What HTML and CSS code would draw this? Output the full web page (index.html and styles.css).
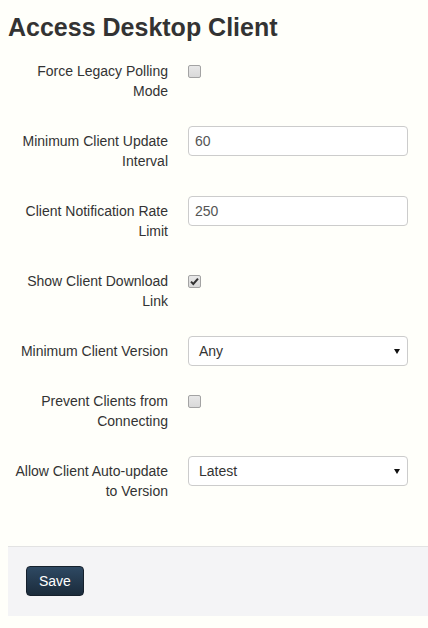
FILE: index.html
```html
<!DOCTYPE html>
<html>
<head>
<meta charset="utf-8">
<link rel="stylesheet" href="styles.css">
</head>
<body>
<div class="page">
  <h1 class="title">Access Desktop Client</h1>
  <form class="form">
    <div class="row">
      <label class="label">Force Legacy Polling Mode</label>
      <div class="control"><span class="check"></span></div>
    </div>
    <div class="row">
      <label class="label">Minimum Client Update Interval</label>
      <div class="control"><input class="input" type="text" value="60"></div>
    </div>
    <div class="row">
      <label class="label">Client Notification Rate Limit</label>
      <div class="control"><input class="input" type="text" value="250"></div>
    </div>
    <div class="row">
      <label class="label">Show Client Download Link</label>
      <div class="control"><span class="check checked"><svg viewBox="0 0 13 13" width="13" height="13"><path d="M3 6.6 L5.3 9 L10 3.6" fill="none" stroke="#333" stroke-width="2"/></svg></span></div>
    </div>
    <div class="row">
      <label class="label">Minimum Client Version</label>
      <div class="control"><div class="select"><span>Any</span><svg class="arrow" viewBox="0 0 6 5" width="6" height="5"><path d="M0 0 H6 L3 5 Z" fill="#111"/></svg></div></div>
    </div>
    <div class="row">
      <label class="label">Prevent Clients from Connecting</label>
      <div class="control"><span class="check"></span></div>
    </div>
    <div class="row">
      <label class="label">Allow Client Auto-update to Version</label>
      <div class="control"><div class="select"><span>Latest</span><svg class="arrow" viewBox="0 0 6 5" width="6" height="5"><path d="M0 0 H6 L3 5 Z" fill="#111"/></svg></div></div>
    </div>
  </form>
  <div class="footer">
    <button class="btn" type="button">Save</button>
  </div>
</div>
</body>
</html>
```

FILE: styles.css
```css
html, body {
  margin: 0;
  padding: 0;
  background: #fffffa;
}
body {
  font-family: "Liberation Sans", Arial, sans-serif;
  font-size: 14px;
  color: #333;
}
.page {
  padding: 12px 0 0 8px;
}
.title {
  margin: 0 0 14px 0;
  font-size: 25px;
  line-height: 30px;
  font-weight: bold;
  color: #333;
}
.form {
  margin: 0;
  padding-bottom: 20px;
}
.row {
  display: grid;
  grid-template-columns: 160px 220px;
  column-gap: 20px;
  margin-bottom: 20px;
}
.label {
  text-align: right;
  line-height: 20px;
  padding: 5px 0;
  color: #333;
}
.control {
  display: flex;
  align-items: flex-start;
}
.check {
  display: block;
  box-sizing: border-box;
  width: 13px;
  height: 13px;
  margin-top: 9px;
  border: 1px solid #a3a3a3;
  border-radius: 2px;
  background: linear-gradient(#e8e8e8, #d9d9d9);
  position: relative;
}
.check svg {
  position: absolute;
  left: -1px;
  top: -1px;
}
.input {
  box-sizing: border-box;
  width: 220px;
  height: 30px;
  margin: 0;
  padding: 0 6px;
  border: 1px solid #ccc;
  border-radius: 4px;
  background: #fff;
  font-family: "Liberation Sans", Arial, sans-serif;
  font-size: 14px;
  color: #555;
  outline: none;
}
.select {
  box-sizing: border-box;
  width: 220px;
  height: 30px;
  padding: 0 10px;
  border: 1px solid #ccc;
  border-radius: 4px;
  background: #fff;
  display: flex;
  align-items: center;
  justify-content: space-between;
  color: #333;
  line-height: 20px;
}
.arrow {
  display: block;
  margin-right: -3px;
}
.footer {
  border-top: 1px solid #e3e3e3;
  background: #f4f4f6;
  padding: 19px 18px 20px 18px;
}
.btn {
  display: block;
  box-sizing: border-box;
  height: 30px;
  padding: 0 12px;
  border: 1px solid #15202c;
  border-radius: 4px;
  background: linear-gradient(#2e4963, #1b2b3b);
  color: #fff;
  font-family: "Liberation Sans", Arial, sans-serif;
  font-size: 14px;
  line-height: 28px;
}
```
